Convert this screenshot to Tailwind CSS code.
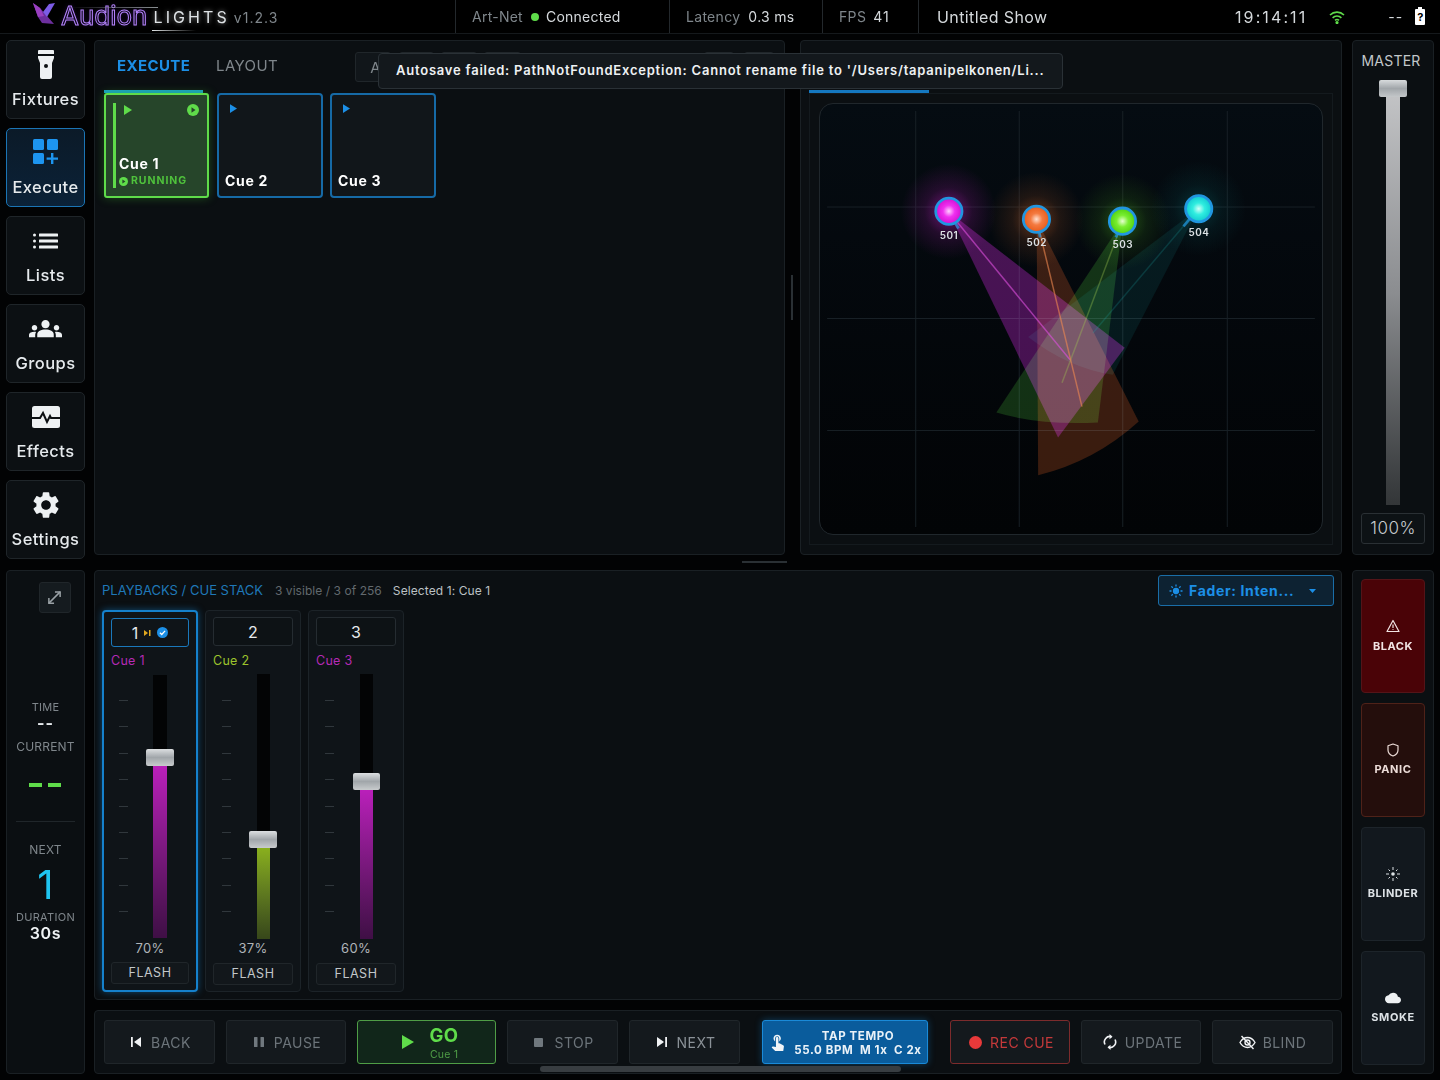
<!DOCTYPE html>
<html lang="en">
<head>
  <meta charset="UTF-8" />
  <meta name="viewport" content="width=device-width, initial-scale=1.0"/>
  <title>Audion Lights</title>
  <script src="https://cdn.jsdelivr.net/npm/@tailwindcss/browser@4"></script>
</head>
<body class="bg-black [font-family:Inter,sans-serif] text-[#e6eaed]">
<div class="relative w-[1440px] h-[1080px] overflow-hidden bg-[#020304]">

  <!-- status bar -->
  <header class="flex items-center h-[34px] bg-black border-b border-[#15191c]">
    <div class="w-[455px] h-full flex items-center pl-[32px] relative">
      <svg class="w-[24px] h-[24px] -mt-[5px]" viewBox="0 0 24 24">
        <polygon points="1,1 8,6 22,22 10,21 6,15" fill="#6d2f9e"/>
        <polygon points="23,1 17,2 11,10 15,15" fill="#7c5ce6"/>
        <polygon points="1,1 8,6 12,14 6,15" fill="#9a3fc0"/>
      </svg>
      <span class="ml-[5px] -mt-[1px] text-[26px] leading-none font-normal text-transparent [-webkit-text-stroke:1px_#b684ff] [text-shadow:0_0_5px_#7b3fe055]">Audion</span>
      <span class="ml-[6px] text-[16px] leading-none font-normal tracking-[3.1px] text-[#dfe3e6] [text-shadow:0_0_5px_#ffffff88]">LIGHTS</span>
      <span class="ml-[4px] mt-[3px] text-[14px] leading-none tracking-[1px] text-[#7f868b]">v1.2.3</span>
      <div class="absolute left-[152px] top-[30px] w-[44px] h-px bg-gradient-to-r from-[#e0e4e6] to-transparent"></div>
      <div class="absolute left-[70px] top-[7px] w-[88px] h-px bg-gradient-to-r from-transparent to-[#8a8f93]"></div>
    </div>
    <div class="w-[214px] h-full border-l border-[#23282c] flex items-center pl-[16px] text-[14px] tracking-[0.25px]">
      <span class="text-[#7f868b]">Art-Net</span>
      <span class="ml-[8px] w-[8px] h-[8px] rounded-full bg-[#5fdc4a]"></span>
      <span class="ml-[7px] text-[#d5d9dc]">Connected</span>
    </div>
    <div class="w-[153px] h-full border-l border-[#23282c] flex items-center pl-[16px] text-[14px] tracking-[0.3px]">
      <span class="text-[#7f868b]">Latency</span>
      <span class="ml-[8px] text-[#d5d9dc]">0.3 ms</span>
    </div>
    <div class="w-[96px] h-full border-l border-[#23282c] flex items-center pl-[16px] text-[14px] tracking-[0.35px]">
      <span class="text-[#7f868b]">FPS</span>
      <span class="ml-[7px] text-[#d5d9dc] tracking-[1px]">41</span>
    </div>
    <div class="flex-1 h-full border-l border-[#23282c] flex items-center pl-[18px] text-[16px] tracking-[0.4px] text-[#d5d9dc]">Untitled Show</div>
    <div class="w-[205px] flex items-center text-[16px] text-[#d5d9dc]">
      <span class="tracking-[2.1px]">19:14:11</span>
      <svg class="ml-[22px] w-[16px] h-[14px]" viewBox="0 0 16 14" fill="none" stroke="#5fdc4a" stroke-width="1.6"><path d="M1 5a10 10 0 0 1 14 0"/><path d="M3.6 7.8a6.4 6.4 0 0 1 8.8 0"/><path d="M6 10.4a3 3 0 0 1 4 0"/><circle cx="8" cy="12.6" r=".8" fill="#5fdc4a"/></svg>
      <span class="ml-[43px] text-[14px] tracking-[1px]">--</span>
      <div class="ml-[12px] relative w-[10px] h-[16px] mt-[1px] bg-white rounded-[1px] flex items-center justify-center text-[11px] leading-none font-bold text-black">?<span class="absolute -top-[2px] left-[3px] w-[4px] h-[2px] bg-white"></span></div>
    </div>
  </header>

  <!-- top row -->
  <div class="flex mt-[6px] ml-[6px] h-[530px] items-start">
    <nav class="w-[79px] flex flex-col gap-[9px]">
      <button class="h-[79px] flex flex-col items-center bg-[#0c1013] border border-[#1f2529] rounded-[5px] pt-[9px]">
        <svg class="w-[18px] h-[30px]" viewBox="0 0 18 30"><path d="M2 0h14a1 1 0 0 1 1 1v3H1V1a1 1 0 0 1 1-1z" fill="#eef1f3"/><path d="M1 6h16v2l-2 5v14a2 2 0 0 1-2 2H5a2 2 0 0 1-2-2V13L1 8z" fill="#eef1f3"/><circle cx="9" cy="16" r="2" fill="#0c1013"/></svg>
        <span class="mt-[9px] text-[16.5px] leading-[20px] font-medium tracking-[0.45px]">Fixtures</span>
      </button>
      <button class="h-[79px] flex flex-col items-center bg-gradient-to-b from-[#0b1a28] to-[#0b2238] border-[1.5px] border-[#1b75b5] rounded-[5px] pt-[10px]">
        <svg class="w-[26px] h-[26px]" viewBox="0 0 26 26" fill="#1d95f0"><rect x="0" y="0" width="11" height="11" rx="1.5"/><rect x="14" y="0" width="11" height="11" rx="1.5"/><rect x="0" y="14" width="11" height="11" rx="1.5"/><path d="M18 14h2.4v4.4H25v2.4h-4.6V25H18v-4.200h-4.400v-2.400H18z"/></svg>
        <span class="mt-[12px] text-[16.5px] leading-[20px] font-medium tracking-[0.45px]">Execute</span>
      </button>
      <button class="h-[79px] flex flex-col items-center bg-[#0c1013] border border-[#1f2529] rounded-[5px] pt-[14px]">
        <svg class="w-[26px] h-[20px]" viewBox="0 0 26 16" fill="#eef1f3"><circle cx="1.500" cy="2" r="1.500"/><circle cx="1.500" cy="8" r="1.500"/><circle cx="1.500" cy="14" r="1.500"/><rect x="6" y="0.500" width="19" height="3" rx=".6"/><rect x="6" y="6.500" width="19" height="3" rx=".6"/><rect x="6" y="12.500" width="19" height="3" rx=".6"/></svg>
        <span class="mt-[14px] text-[16.5px] leading-[20px] font-medium tracking-[0.45px]">Lists</span>
      </button>
      <button class="h-[79px] flex flex-col items-center bg-[#0c1013] border border-[#1f2529] rounded-[5px] pt-[11px]">
        <svg class="w-[33px] h-[26px]" viewBox="0 4 24 16" fill="#eef1f3"><path d="M4 13c1.100 0 2-.9 2-2s-.9-2-2-2-2 .9-2 2 .9 2 2 2zm1.130 1.100c-.37-.06-.74-.1-1.130-.1-.99 0-1.930.21-2.780.58C.48 14.900 0 15.620 0 16.430V18h4.500v-1.610c0-.83.23-1.610.63-2.290zM20 13c1.100 0 2-.9 2-2s-.9-2-2-2-2 .9-2 2 .9 2 2 2zm4 3.430c0-.81-.48-1.530-1.220-1.850-.85-.37-1.790-.58-2.780-.58-.39 0-.76.04-1.130.1.4.68.63 1.460.63 2.290V18H24v-1.570zm-7.760-3.080c-1.170-.52-2.610-.9-4.240-.9-1.630 0-3.070.39-4.240.9C6.680 13.830 6 14.910 6 16.090V18h12v-1.910c0-1.180-.68-2.260-1.760-2.740zM12 11.500c1.660 0 3-1.340 3-3s-1.340-3-3-3-3 1.340-3 3 1.340 3 3 3z"/></svg>
        <span class="mt-[11px] text-[16.5px] leading-[20px] font-medium tracking-[0.45px]">Groups</span>
      </button>
      <button class="h-[79px] flex flex-col items-center bg-[#0c1013] border border-[#1f2529] rounded-[5px] pt-[12px]">
        <svg class="w-[28px] h-[24px]" viewBox="0 0 28 24"><rect x="0" y="1" width="28" height="22" rx="2.500" fill="#eef1f3"/><path d="M0 13h8l3-5 4 9 3-6 1 2h9" fill="none" stroke="#0c1013" stroke-width="2"/></svg>
        <span class="mt-[12px] text-[16.5px] leading-[20px] font-medium tracking-[0.45px]">Effects</span>
      </button>
      <button class="h-[79px] flex flex-col items-center bg-[#0c1013] border border-[#1f2529] rounded-[5px] pt-[8px]">
        <svg class="w-[32px] h-[32px]" viewBox="0 0 24 24" fill="#eef1f3"><path d="M19.140 12.940c.04-.3.06-.61.06-.94 0-.32-.02-.64-.07-.94l2.030-1.580a.49.49 0 0 0 .12-.61l-1.920-3.320a.488.488 0 0 0-.59-.22l-2.390.96c-.5-.38-1.030-.7-1.620-.94l-.36-2.540a.484.484 0 0 0-.48-.41h-3.840c-.24 0-.43.17-.47.41l-.36 2.540c-.59.24-1.130.57-1.620.94l-2.390-.96c-.22-.08-.47 0-.59.22L2.740 8.870c-.12.21-.08.47.12.61l2.030 1.580c-.05.3-.09.63-.09.94s.02.64.07.94l-2.030 1.580a.49.49 0 0 0-.12.61l1.920 3.320c.12.22.37.29.59.22l2.390-.96c.5.38 1.030.7 1.620.94l.36 2.540c.05.24.24.41.48.41h3.840c.24 0 .44-.17.47-.41l.36-2.540c.59-.24 1.130-.56 1.620-.94l2.390.96c.22.08.47 0 .59-.22l1.920-3.320c.12-.22.07-.47-.12-.61l-2.010-1.580zM12 15.600c-1.980 0-3.600-1.620-3.600-3.600s1.620-3.600 3.600-3.600 3.600 1.620 3.600 3.600-1.620 3.600-3.600 3.600z"/></svg>
        <span class="mt-[8px] text-[16.5px] leading-[20px] font-medium tracking-[0.45px]">Settings</span>
      </button>
    </nav>

    <!-- execute panel -->
    <section class="ml-[9px] w-[691px] h-[515px] bg-[#0b0f12] border border-[#1a2024] rounded-[4px] pl-[9px] pt-[5px]">
      <div class="flex items-start h-[47px]">
        <div class="w-[99px] h-[47px] border-b-[3px] border-[#17a0c4] pl-[13px] pt-[10px] text-[15px] leading-[20px] font-bold tracking-[0.4px] text-[#1c8fe6]">EXECUTE</div>
        <div class="ml-[13px] pt-[10px] text-[15px] leading-[20px] tracking-[0.4px] text-[#7f868b]">LAYOUT</div>
        <div class="ml-[77px] mt-[6px] w-[36px] h-[30px] bg-[#11161a] border border-[#20262a] rounded-[3px] pl-[14px] pt-[4px] text-[15px] text-[#7f868b]">A</div>
        <div class="ml-[8px] mt-[6px] w-[35px] h-[30px] bg-[#11161a] border border-[#20262a] rounded-[3px]"></div>
        <div class="ml-[7px] mt-[6px] w-[36px] h-[30px] bg-[#11161a] border border-[#20262a] rounded-[3px]"></div>
        <div class="ml-[7px] mt-[6px] w-[37px] h-[30px] bg-[#11161a] border border-[#20262a] rounded-[3px]"></div>
        <div class="ml-[183px] mt-[6px] w-[30px] h-[30px] bg-[#11161a] border border-[#20262a] rounded-[3px]"></div>
        <div class="ml-[10px] mt-[6px] w-[30px] h-[30px] bg-[#11161a] border border-[#20262a] rounded-[3px]"></div>
      </div>
      <div class="flex gap-2">
        <div class="relative w-[105px] h-[105px] bg-[#26452a] border-[2.500px] border-[#5fdc4a] rounded-[3px] shadow-[0_0_10px_#3fae3066]">
          <div class="absolute left-[7px] top-[8px] w-[2.500px] h-[85px] bg-[#5fdc4a]"></div>
          <svg class="absolute left-[18px] top-[10px] w-[8px] h-[10px]" viewBox="0 0 8 10" fill="#5fdc4a"><path d="M0 0l8 5-8 5z"/></svg>
          <svg class="absolute right-[8px] top-[9px] w-[12px] h-[12px]" viewBox="0 0 12 12"><circle cx="6" cy="6" r="6" fill="#5fdc4a"/><path d="M4.500 3.300l4 2.700-4 2.700z" fill="#26452a"/></svg>
          <div class="absolute left-[13px] top-[60px] text-[14px] leading-[18px] font-bold tracking-[0.7px] text-white">Cue 1</div>
          <div class="absolute left-[13px] top-[79px] flex items-center">
            <svg class="w-[9px] h-[9px]" viewBox="0 0 12 12"><circle cx="6" cy="6" r="6" fill="#5fdc4a"/><path d="M4.500 3.300l4 2.700-4 2.700z" fill="#26452a"/></svg>
            <span class="ml-[3px] text-[10.5px] leading-[14px] font-bold tracking-[0.95px] text-[#4fc23c]">RUNNING</span>
          </div>
        </div>
        <div class="relative w-[106px] h-[105px] bg-[#11161a] border-[2px] border-[#166aa6] rounded-[4px]">
          <svg class="absolute left-[11px] top-[9px] w-[7px] h-[9px]" viewBox="0 0 8 10" fill="#1c8fe6"><path d="M0 0l8 5-8 5z"/></svg>
          <div class="absolute left-[6px] top-[77px] text-[14px] leading-[18px] font-bold tracking-[0.7px] text-white">Cue 2</div>
        </div>
        <div class="relative -ml-px w-[106px] h-[105px] bg-[#11161a] border-[2px] border-[#166aa6] rounded-[4px]">
          <svg class="absolute left-[11px] top-[9px] w-[7px] h-[9px]" viewBox="0 0 8 10" fill="#1c8fe6"><path d="M0 0l8 5-8 5z"/></svg>
          <div class="absolute left-[6px] top-[77px] text-[14px] leading-[18px] font-bold tracking-[0.7px] text-white">Cue 3</div>
        </div>
      </div>
    </section>

    <!-- splitter -->
    <div class="w-[15px] h-[515px] flex items-center justify-center">
      <div class="w-[2px] h-[45px] bg-[#2a3034] -mt-[1px] -ml-px"></div>
    </div>

    <!-- visualizer -->
    <section class="w-[542px] h-[515px] bg-[#0b0f12] border border-[#1a2024] rounded-[4px] pl-[8px] pr-[8px] pt-[49px]">
      <div class="w-[120px] h-[3px] bg-[#1578c0]"></div>
      <div class="w-[524px] h-[452px] border border-[#141a1e] p-[9px]">
        <div class="w-[504px] h-[432px] rounded-[14px] border border-[#20272c] overflow-hidden bg-gradient-to-b from-[#050c12] to-[#020406]">
          <svg class="block w-full h-full" viewBox="819 103 504 432">
            <defs>
              <radialGradient id="ballM"><stop offset="0" stop-color="#ffd0ff"/><stop offset=".45" stop-color="#f030f0"/><stop offset="1" stop-color="#d010d0"/></radialGradient>
              <radialGradient id="ballO"><stop offset="0" stop-color="#ffe0d0"/><stop offset=".45" stop-color="#f47a40"/><stop offset="1" stop-color="#e85a18"/></radialGradient>
              <radialGradient id="ballG"><stop offset="0" stop-color="#e8ffd0"/><stop offset=".45" stop-color="#78ee30"/><stop offset="1" stop-color="#50d010"/></radialGradient>
              <radialGradient id="ballC"><stop offset="0" stop-color="#d0fff8"/><stop offset=".45" stop-color="#30eee0"/><stop offset="1" stop-color="#10c8d0"/></radialGradient>
              <radialGradient id="glowM"><stop offset="0" stop-color="#e020e0" stop-opacity=".5"/><stop offset=".5" stop-color="#e020e0" stop-opacity=".14"/><stop offset="1" stop-color="#e020e0" stop-opacity="0"/></radialGradient>
              <radialGradient id="glowO"><stop offset="0" stop-color="#ff7a30" stop-opacity=".4"/><stop offset=".5" stop-color="#ff7a30" stop-opacity=".11"/><stop offset="1" stop-color="#ff7a30" stop-opacity="0"/></radialGradient>
              <radialGradient id="glowG"><stop offset="0" stop-color="#60e020" stop-opacity=".36"/><stop offset=".5" stop-color="#60e020" stop-opacity=".1"/><stop offset="1" stop-color="#60e020" stop-opacity="0"/></radialGradient>
              <radialGradient id="glowC"><stop offset="0" stop-color="#10d8d8" stop-opacity=".2"/><stop offset=".5" stop-color="#10d8d8" stop-opacity=".06"/><stop offset="1" stop-color="#10d8d8" stop-opacity="0"/></radialGradient>
            </defs>
            <g stroke="#182026" stroke-width="1">
              <path d="M915 110V528M1019 110V528M1123 110V528M1228 110V528"/>
              <path d="M826 206.500H1316M826 318.500H1316M826 431H1316"/>
            </g>
            <circle cx="948" cy="211" r="48" fill="url(#glowM)"/>
            <circle cx="1036" cy="219" r="48" fill="url(#glowO)"/>
            <circle cx="1123" cy="221" r="48" fill="url(#glowG)"/>
            <circle cx="1199" cy="208" r="48" fill="url(#glowC)"/>
            <path class="mix-blend-screen" d="M1199 208L1113 375Q1068 368 1028 337Z" fill="#10b8b8" fill-opacity=".1"/>
            <path class="mix-blend-screen" d="M1123 221L1098 423Q1040 426 996 413Z" fill="#48c830" fill-opacity=".22"/>
            <path class="mix-blend-screen" d="M1036.500 219L1139 422Q1095 462 1038 476Z" fill="#ff6a20" fill-opacity=".22"/>
            <path class="mix-blend-screen" d="M948 211L1125 348L1058 438Z" fill="#d020e0" fill-opacity=".33"/>
            <g stroke-width="1.500" fill="none">
              <path d="M1199 208L1093 333" stroke="#1aa8a8" stroke-opacity=".22"/>
              <path d="M1123 221L1062 383" stroke="#a0c850" stroke-opacity=".35"/>
              <path d="M948 211L1070 360" stroke="#e050e0" stroke-opacity=".6"/>
              <path d="M1036.500 219L1082 407" stroke="#f08850" stroke-opacity=".6"/>
            </g>
            <g stroke="#2196e0" stroke-width="2.800">
              <path d="M948 211L958 228M1036.500 219L1040 237M1123 221L1116 237M1199 208L1184 226" stroke-opacity=".7"/>
              <circle cx="948.300" cy="210.700" r="13.200" fill="url(#ballM)"/>
              <circle cx="1036.300" cy="218.700" r="13.200" fill="url(#ballO)"/>
              <circle cx="1122.700" cy="220.700" r="13.200" fill="url(#ballG)"/>
              <circle cx="1199.300" cy="208.300" r="13.200" fill="url(#ballC)"/>
            </g>
            <g fill="#dde2e5" font-size="10" font-weight="600" text-anchor="middle" font-family="Inter, sans-serif" letter-spacing=".5">
              <text x="948.500" y="238.500">501</text>
              <text x="1036.500" y="246">502</text>
              <text x="1123" y="247.500">503</text>
              <text x="1199.500" y="235.500">504</text>
            </g>
          </svg>
        </div>
      </div>
    </section>

    <!-- master -->
    <section class="ml-[10px] w-[82px] h-[515px] bg-[#0b0f12] border border-[#1a2024] rounded-[4px] flex flex-col items-center">
      <div class="mt-[11px] -ml-[4px] text-[14px] leading-[18px] tracking-[0.2px] text-[#c2c7ca]">MASTER</div>
      <div class="relative mt-[11px] w-[14px] h-[424px] bg-gradient-to-b from-[#c6c7c9] via-[#8b8d90] to-[#333638]">
        <div class="absolute -left-[7px] -top-[1px] w-[28px] h-[17px] rounded-[2px] bg-gradient-to-b from-[#d8dbdd] via-[#a1a6aa] to-[#c4c7c9]"></div>
      </div>
      <div class="mt-[8px] w-[64px] h-[31px] border border-[#2a3034] rounded-[3px] bg-[#0d1215] flex items-center justify-center text-[17px] font-light tracking-[0.5px] text-[#c9cdd0]">100%</div>
    </section>
  </div>

  <!-- bottom row -->
  <div class="flex ml-[6px] h-[504px]">
    <aside class="w-[79px] bg-[#0b0f12] border border-[#1a2024] rounded-[4px] flex flex-col items-center">
      <div class="mt-[11px] ml-[18px] w-[32px] h-[31px] bg-[#151b1f] border border-[#20262a] rounded-[3px] flex items-center justify-center">
        <svg class="w-[15px] h-[15px]" viewBox="0 0 16 16" fill="none" stroke="#9aa1a6" stroke-width="1.600"><path d="M2 14L14 2"/><path d="M8.500 2H14V7.500"/><path d="M7.500 14H2V8.500"/></svg>
      </div>
      <div class="mt-[87px] text-[11px] leading-[14px] tracking-[0.2px] text-[#7f868b]">TIME</div>
      <div class="mt-[1px] text-[16px] leading-[17px] font-bold tracking-[1px] text-[#e6eaed]">--</div>
      <div class="mt-[7px] text-[12px] leading-[16px] tracking-[0.2px] text-[#7f868b]">CURRENT</div>
      <div class="mt-[28px] -ml-[2px] flex gap-[6px]"><span class="w-[13px] h-[4px] bg-[#5fdc4a]"></span><span class="w-[13px] h-[4px] bg-[#5fdc4a]"></span></div>
      <div class="mt-[34px] w-[59px] h-px bg-[#20262a]"></div>
      <div class="mt-[21px] text-[12px] leading-[14px] tracking-[0.2px] text-[#7f868b]">NEXT</div>
      <div class="mt-[6px] text-[40px] leading-[44px] font-normal text-[#1fc4f0]">1</div>
      <div class="mt-[3px] text-[11px] leading-[14px] tracking-[0.3px] text-[#7f868b]">DURATION</div>
      <div class="text-[16px] leading-[18px] font-semibold tracking-[0.6px] text-[#f0f3f5]">30s</div>
    </aside>

    <div class="ml-[9px] w-[1248px] flex flex-col gap-[10px]">
      <!-- playbacks -->
      <section class="relative h-[430px] bg-[#0b0f12] border border-[#1a2024] rounded-[4px] px-[7px]">
        <div class="flex items-baseline pt-[10px] h-[39px] whitespace-nowrap">
          <span class="text-[13px] leading-[18px] tracking-[0px] text-[#1f78b8]">PLAYBACKS / CUE STACK</span>
          <span class="ml-[12px] text-[12px] leading-[18px] tracking-[0.05px] text-[#62696e]">3 visible / 3 of 256</span>
          <span class="ml-[11px] text-[12px] leading-[18px] tracking-[0.1px] text-[#bcc1c4]">Selected 1: Cue 1</span>
        </div>
        <div class="absolute right-[7px] top-[4px] w-[176px] h-[31px] bg-[#0d2232] border border-[#1a6ea8] rounded-[3px] flex items-center pl-[10px] text-[14px] font-bold tracking-[0.65px] text-[#1c8fe6]">
          <svg class="w-[14px] h-[14px]" viewBox="0 0 14 14" fill="none" stroke="#1c8fe6" stroke-width="1.300"><circle cx="7" cy="7" r="2.500" fill="#1c8fe6"/><path d="M7 .5v2M7 11.500v2M.5 7h2M11.500 7h2M2.400 2.400l1.400 1.400M10.200 10.200l1.400 1.400M2.400 11.600l1.400-1.400M10.200 3.800l1.400-1.400"/></svg>
          <span class="ml-[6px]">Fader: Inten...</span>
          <svg class="ml-[15px] w-[7px] h-[4px]" viewBox="0 0 7 4" fill="#1c8fe6"><path d="M0 0h7L3.500 4z"/></svg>
        </div>

        <div class="flex gap-[7px]">
          <!-- cue 1 -->
          <div class="w-[96px] h-[382px] bg-[#0f1418] border-[2px] border-[#1581cc] rounded-[4px] shadow-[0_0_7px_#1581cc88] flex flex-col px-[7px] pt-[6px]">
            <div class="h-[29px] border-[1.500px] border-[#1a78bb] rounded-[3px] flex items-center justify-center text-[16px] text-[#e6eaed]">
              <span>1</span>
              <svg class="ml-[6px] w-[7px] h-[6px]" viewBox="0 0 7 6" fill="#e0a820"><path d="M0 0l4 3-4 3z"/><rect x="5" y="0" width="1.500" height="6"/></svg>
              <svg class="ml-[6px] w-[11px] h-[11px]" viewBox="0 0 12 12"><circle cx="6" cy="6" r="6" fill="#1c8fe6"/><path d="M3.200 6.200l2 2 3.600-4" fill="none" stroke="#fff" stroke-width="1.400"/></svg>
            </div>
            <div class="mt-[6px] text-[12.500px] leading-[16px] tracking-[0.3px] text-[#b52ab5]">Cue 1</div>
            <div class="flex mt-[6px] h-[263px]">
              <div class="ml-[8px] w-[9px] pt-[25px] flex flex-col gap-[25.400px]">
                <span class="h-px bg-[#30373c]"></span><span class="h-px bg-[#30373c]"></span><span class="h-px bg-[#30373c]"></span><span class="h-px bg-[#30373c]"></span><span class="h-px bg-[#30373c]"></span><span class="h-px bg-[#30373c]"></span><span class="h-px bg-[#30373c]"></span><span class="h-px bg-[#30373c]"></span><span class="h-px bg-[#30373c]"></span>
              </div>
              <div class="relative ml-[25px] w-[14px] h-[263px] bg-[#030405]">
                <div class="absolute bottom-0 left-0 w-full h-[180px] bg-gradient-to-b from-[#c020c0] to-[#3f0f45]"></div>
                <div class="absolute -left-[7px] top-[74px] w-[28px] h-[17px] rounded-[2px] bg-gradient-to-b from-[#dcdfe1] via-[#a1a6aa] to-[#c8cbcd]"></div>
              </div>
            </div>
            <div class="mt-[2px] text-center text-[13px] leading-[16px] tracking-[0.3px] text-[#b0b5b9]">70%</div>
            <div class="mt-[6px] h-[22px] bg-[#12171b] border border-[#20262a] rounded-[3px] flex items-center justify-center text-[12.500px] tracking-[0.5px] text-[#c2c7ca]">FLASH</div>
          </div>
          <!-- cue 2 -->
          <div class="w-[96px] h-[382px] bg-[#0f1418] border border-[#1c2328] rounded-[4px] flex flex-col px-[7px] pt-[6px]">
            <div class="h-[29px] bg-[#0d1215] border border-[#252c31] rounded-[3px] flex items-center justify-center text-[16px] text-[#e6eaed]">2</div>
            <div class="mt-[7px] text-[12.500px] leading-[16px] tracking-[0.3px] text-[#9cc32c]">Cue 2</div>
            <div class="flex mt-[5px] h-[265px]">
              <div class="ml-[9px] w-[9px] pt-[26px] flex flex-col gap-[25.400px]">
                <span class="h-px bg-[#30373c]"></span><span class="h-px bg-[#30373c]"></span><span class="h-px bg-[#30373c]"></span><span class="h-px bg-[#30373c]"></span><span class="h-px bg-[#30373c]"></span><span class="h-px bg-[#30373c]"></span><span class="h-px bg-[#30373c]"></span><span class="h-px bg-[#30373c]"></span><span class="h-px bg-[#30373c]"></span>
              </div>
              <div class="relative ml-[26px] w-[13px] h-[265px] bg-[#030405]">
                <div class="absolute bottom-0 left-0 w-full h-[98px] bg-gradient-to-b from-[#90b81c] to-[#37471a]"></div>
                <div class="absolute -left-[8px] top-[157px] w-[28px] h-[17px] rounded-[2px] bg-gradient-to-b from-[#dcdfe1] via-[#a1a6aa] to-[#c8cbcd]"></div>
              </div>
            </div>
            <div class="mt-[1px] text-center text-[13px] leading-[16px] tracking-[0.3px] text-[#b0b5b9]">37%</div>
            <div class="mt-[7px] h-[22px] bg-[#12171b] border border-[#20262a] rounded-[3px] flex items-center justify-center text-[12.500px] tracking-[0.5px] text-[#c2c7ca]">FLASH</div>
          </div>
          <!-- cue 3 -->
          <div class="w-[96px] h-[382px] bg-[#0f1418] border border-[#1c2328] rounded-[4px] flex flex-col px-[7px] pt-[6px]">
            <div class="h-[29px] bg-[#0d1215] border border-[#252c31] rounded-[3px] flex items-center justify-center text-[16px] text-[#e6eaed]">3</div>
            <div class="mt-[7px] text-[12.500px] leading-[16px] tracking-[0.3px] text-[#b52ab5]">Cue 3</div>
            <div class="flex mt-[5px] h-[265px]">
              <div class="ml-[9px] w-[9px] pt-[26px] flex flex-col gap-[25.400px]">
                <span class="h-px bg-[#30373c]"></span><span class="h-px bg-[#30373c]"></span><span class="h-px bg-[#30373c]"></span><span class="h-px bg-[#30373c]"></span><span class="h-px bg-[#30373c]"></span><span class="h-px bg-[#30373c]"></span><span class="h-px bg-[#30373c]"></span><span class="h-px bg-[#30373c]"></span><span class="h-px bg-[#30373c]"></span>
              </div>
              <div class="relative ml-[26px] w-[13px] h-[265px] bg-[#030405]">
                <div class="absolute bottom-0 left-0 w-full h-[156px] bg-gradient-to-b from-[#c020c0] to-[#3f0f45]"></div>
                <div class="absolute -left-[7px] top-[99px] w-[27px] h-[17px] rounded-[2px] bg-gradient-to-b from-[#dcdfe1] via-[#a1a6aa] to-[#c8cbcd]"></div>
              </div>
            </div>
            <div class="mt-[1px] text-center text-[13px] leading-[16px] tracking-[0.3px] text-[#b0b5b9]">60%</div>
            <div class="mt-[7px] h-[22px] bg-[#12171b] border border-[#20262a] rounded-[3px] flex items-center justify-center text-[12.500px] tracking-[0.5px] text-[#c2c7ca]">FLASH</div>
          </div>
        </div>
      </section>

      <!-- transport -->
      <section class="relative h-[64px] bg-[#0b0f12] border border-[#1a2024] rounded-[4px] flex pl-[9px] pt-[9px] text-[14px] tracking-[0.45px] text-[#6c747a]">
        <button class="w-[111px] h-[44px] pl-[3px] bg-[#14191d] border border-[#20262a] rounded-[3px] flex items-center justify-center gap-[10px]">
          <svg class="w-[10px] h-[10px]" viewBox="0 0 10 10" fill="#f0f2f4"><rect x="0" y="0" width="1.800" height="10"/><path d="M10 0v10L3 5z"/></svg>BACK
        </button>
        <button class="ml-[11px] w-[120px] h-[44px] pl-[3px] bg-[#14191d] border border-[#20262a] rounded-[3px] flex items-center justify-center gap-[10px]">
          <svg class="w-[10px] h-[10px]" viewBox="0 0 10 10" fill="#70787e"><rect x="0" y="0" width="3.500" height="10" rx=".6"/><rect x="6.500" y="0" width="3.500" height="10" rx=".6"/></svg>PAUSE
        </button>
        <button class="ml-[11px] w-[139px] h-[44px] bg-[#11261a] border-[1.500px] border-[#4f9d46] rounded-[3px] flex items-center pl-[44px]">
          <svg class="w-[12px] h-[14px]" viewBox="0 0 12 14" fill="#5fdc4a"><path d="M0 0l12 7-12 7z"/></svg>
          <span class="ml-[15px] pt-[2px] w-[30px] flex flex-col items-center">
            <span class="text-[18.500px] leading-[20px] font-bold tracking-[0.4px] text-[#5fdc4a]">GO</span>
            <span class="mt-[3px] text-[10.500px] leading-[13px] tracking-[0.2px] text-[#4f9d46] whitespace-nowrap">Cue 1</span>
          </span>
        </button>
        <button class="ml-[11px] w-[111px] h-[44px] pl-[3px] bg-[#14191d] border border-[#20262a] rounded-[3px] flex items-center justify-center gap-[11px]">
          <span class="w-[9px] h-[9px] rounded-[1px] bg-[#70787e]"></span>STOP
        </button>
        <button class="ml-[11px] w-[111px] h-[44px] pl-[3px] bg-[#14191d] border border-[#20262a] rounded-[3px] flex items-center justify-center gap-[10px] text-[#8b9298]">
          <svg class="w-[10px] h-[10px]" viewBox="0 0 10 10" fill="#f0f2f4"><path d="M0 0v10l7-5z"/><rect x="8.200" y="0" width="1.800" height="10"/></svg>NEXT
        </button>
        <button class="ml-[22px] w-[166px] h-[44px] bg-[#0a5c9c] border border-[#1a8ad8] rounded-[3px] shadow-[0_0_7px_#1581cc66] flex items-center pl-[8px] text-[#eaf2f8]">
          <svg class="w-[14px] h-[18px]" viewBox="4 1 17 22" fill="#f0f4f7"><path d="M9 11.240V7.500a2.500 2.500 0 0 1 5 0v3.740c1.210-.81 2-2.180 2-3.740C16 5.010 13.990 3 11.500 3S7 5.010 7 7.500c0 1.560.79 2.930 2 3.740zm9.840 4.630l-4.540-2.260c-.17-.07-.35-.11-.54-.11H13v-6c0-.83-.67-1.500-1.500-1.500S10 6.670 10 7.500v10.740l-3.430-.72c-.08-.01-.15-.03-.24-.03-.31 0-.59.13-.79.33l-.79.8 4.940 4.940c.27.27.65.44 1.060.44h6.790c.75 0 1.330-.55 1.440-1.280l.75-5.270c.01-.07.02-.14.02-.2 0-.62-.38-1.160-.91-1.380z"/></svg>
          <span class="flex-1 pl-[4px] flex flex-col items-center text-[11.500px] leading-[14px] font-bold tracking-[0.6px] whitespace-pre">
            <span class="mt-[1px]">TAP TEMPO</span>
            <span>55.0 BPM  M 1x  C 2x</span>
          </span>
        </button>
        <button class="ml-[22px] w-[120px] h-[44px] pl-[3px] bg-[#14191d] border-[1.500px] border-[#7c2b2c] rounded-[3px] flex items-center justify-center gap-[8px] text-[#c4393a]">
          <span class="w-[13px] h-[13px] rounded-full bg-[#e8393a]"></span>REC CUE
        </button>
        <button class="ml-[11px] w-[120px] h-[44px] pl-[3px] bg-[#14191d] border border-[#20262a] rounded-[3px] flex items-center justify-center gap-[8px]">
          <svg class="w-[14px] h-[16px]" viewBox="0 0 14 16" fill="none" stroke="#f0f2f4" stroke-width="1.600"><path d="M2 10.500A5.500 5.500 0 0 1 8.500 2.700"/><path d="M6.500 0l3 2.700-3 2.600" fill="#f0f2f4" stroke="none"/><path d="M12 5.500A5.500 5.500 0 0 1 5.500 13.300"/><path d="M7.500 16l-3-2.700 3-2.600" fill="#f0f2f4" stroke="none"/></svg>UPDATE
        </button>
        <button class="ml-[11px] w-[121px] h-[44px] bg-[#14191d] border border-[#20262a] rounded-[3px] flex items-center justify-center gap-[7px]">
          <svg class="w-[17px] h-[15px]" viewBox="0 0 17 15" fill="none" stroke="#f0f2f4" stroke-width="1.400"><path d="M1 7.500C3 4 5.500 2.500 8.500 2.500S14 4 16 7.500c-2 3.500-4.500 5-7.500 5S3 11 1 7.500z"/><circle cx="8.500" cy="7.500" r="2.500"/><path d="M2.500 1l12 13"/></svg>BLIND
        </button>
        <div class="absolute left-[445px] top-[55px] w-[361px] h-[6px] rounded-full bg-[#383d41]"></div>
      </section>
    </div>

    <!-- side actions -->
    <aside class="ml-[10px] w-[82px] bg-[#0b0f12] border border-[#1a2024] rounded-[4px] flex flex-col gap-[10px] px-[8px] py-[8px] text-[11px] font-bold tracking-[0.55px]">
      <button class="flex-1 bg-[#4a0307] border border-[#541418] rounded-[4px] flex flex-col items-center pt-[39px] text-[#f2e4e4]">
        <svg class="w-[14px] h-[14px]" viewBox="0 0 14 14" fill="none" stroke="#f2e4e4" stroke-width="1.200"><path d="M7 1.500L13 12.500H1z" stroke-linejoin="round"/><path d="M7 5.500v3.500M7 10.200v.8"/></svg>
        <span class="mt-[6px] leading-[14px]">BLACK</span>
      </button>
      <button class="flex-1 bg-[#240e0c] border border-[#4f2219] rounded-[4px] flex flex-col items-center pt-[39px] text-[#ecdcd8]">
        <svg class="w-[14px] h-[14px]" viewBox="0 0 14 14" fill="none" stroke="#ecdcd8" stroke-width="1.200"><path d="M7 1l5 1.800V7c0 3-2.200 5-5 6-2.800-1-5-3-5-6V2.800z" stroke-linejoin="round"/></svg>
        <span class="mt-[5px] leading-[14px]">PANIC</span>
      </button>
      <button class="flex-1 bg-[#12181e] border border-[#1d242a] rounded-[4px] flex flex-col items-center pt-[39px] text-[#dde2e6]">
        <svg class="w-[14px] h-[14px]" viewBox="0 0 14 14" fill="none" stroke="#dde2e6" stroke-width="1"><circle cx="7" cy="7" r="1.800" fill="#dde2e6" stroke="none"/><path d="M7 0v3M7 11v3M0 7h3M11 7h3M2.500 2.500l1.500 1.500M10 10l1.500 1.500M2.500 11.500L4 10M10 4l1.500-1.500"/></svg>
        <span class="mt-[5px] leading-[14px]">BLINDER</span>
      </button>
      <button class="flex-1 bg-[#12181e] border border-[#1d242a] rounded-[4px] flex flex-col items-center pt-[39px] text-[#dde2e6]">
        <svg class="w-[16px] h-[14px]" viewBox="0 0 24 18" fill="#eef1f3"><path d="M19.400 7.040A7.490 7.490 0 0 0 12 1a7.490 7.490 0 0 0-6.650 4.040A5.990 5.990 0 0 0 0 11c0 3.310 2.690 6 6 6h13c2.760 0 5-2.240 5-5 0-2.640-2.050-4.780-4.600-4.960z"/></svg>
        <span class="mt-[5px] leading-[14px]">SMOKE</span>
      </button>
    </aside>
  </div>

  <!-- horizontal splitter grip -->
  <div class="absolute left-[742px] top-[561px] w-[45px] h-[2px] bg-[#2a3034]"></div>

  <!-- autosave toast -->
  <div class="absolute left-[378px] top-[53px] w-[685px] h-[36px] bg-[#13181c] border border-[#2a3136] rounded-[4px] flex items-center pl-[17px] text-[13px] font-semibold tracking-[0.78px] text-[#eef1f3] whitespace-nowrap">Autosave failed: PathNotFoundException: Cannot rename file to '/Users/tapanipelkonen/Li...</div>
</div>
</body>
</html>
